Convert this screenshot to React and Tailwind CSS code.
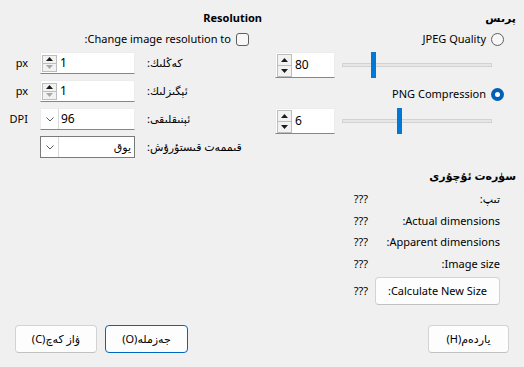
import React from "react";

const font = { fontFamily: '"Segoe UI", "Noto Sans", "DejaVu Sans", sans-serif' };

function Arrow({ up, disabled }) {
  return (
    <svg width="7" height="4" viewBox="0 0 7 4">
      <path d={up ? "M0 4L3.5 0L7 4Z" : "M0 0L3.5 4L7 0Z"} fill={disabled ? "#a8a8a8" : "#1b1b1b"} />
    </svg>
  );
}

function Chevron() {
  return (
    <svg width="8" height="5" viewBox="0 0 8 5">
      <path d="M0.5 0.5L4 4L7.5 0.5" fill="none" stroke="#5c5c5c" strokeWidth="1" />
    </svg>
  );
}

function SpinBox({ value, tall, downDisabled }) {
  return (
    <div
      dir="ltr"
      className={
        "flex items-center bg-white border border-[#ececec] border-b-[#868686] pl-px " +
        (tall ? "w-[60px] h-[26px]" : "w-[95px] h-[22px]")
      }
    >
      <div className={"flex flex-col w-[15px] " + (tall ? "h-[23px]" : "h-[17px]")}>
        <div className="flex-1 flex items-center justify-center border border-[#bdbdbd] bg-[#f2f2f2]">
          <Arrow up />
        </div>
        <div className="flex-1 flex items-center justify-center border border-t-0 border-[#bdbdbd] bg-[#f2f2f2]">
          <Arrow disabled={downDisabled} />
        </div>
      </div>
      <span className="pl-[3px] text-[12px] text-black">{value}</span>
    </div>
  );
}

function Combo({ value, boxed }) {
  return (
    <div
      className={
        "flex items-center w-[95px] h-[22px] bg-white " +
        (boxed ? "border border-[#7a7a7a]" : "border border-[#ececec] border-b-[#868686]")
      }
    >
      <div dir="ltr" className="flex flex-1 items-center h-full">
        <div className="w-[18px] h-full flex items-center justify-center border-r border-[#d9d9d9]">
          <Chevron />
        </div>
        {boxed ? (
          <span dir="rtl" className="flex-1 text-right pr-[3px] text-[11px]">
            {value}
          </span>
        ) : (
          <span className="pl-[2px] text-[12px]">{value}</span>
        )}
      </div>
    </div>
  );
}

function Slider({ pos }) {
  return (
    <div className="relative w-[150px] h-[26px] flex items-center">
      <div className="w-full h-[4px] bg-[#e7e7e7] border border-[#d2d2d2]" />
      <div className={"absolute top-0 h-[26px] w-[5px] bg-[#0078d7] " + pos} />
    </div>
  );
}

function Radio({ checked, label }) {
  return (
    <div className="flex items-center gap-[5px] h-[18px] pr-[12px]">
      {checked ? (
        <span className="w-[13px] h-[13px] rounded-full bg-[#005fb8] flex items-center justify-center">
          <span className="w-[5px] h-[5px] rounded-full bg-white" />
        </span>
      ) : (
        <span className="w-[13px] h-[13px] rounded-full border border-[#5f5f5f] bg-[#f7f7f7]" />
      )}
      <span className="text-[11px]">{label}</span>
    </div>
  );
}

function Btn({ children, primary, w }) {
  return (
    <div
      className={
        "h-[28px] flex items-center justify-center rounded-[4px] bg-[#fdfdfd] text-[11px] whitespace-nowrap " +
        w +
        (primary ? " border border-[#0067c0]" : " border border-[#d3d3d3] border-b-[#c2c2c2]")
      }
    >
      {children}
    </div>
  );
}

export default function App() {
  return (
    <div
      dir="rtl"
      style={font}
      className="w-[524px] h-[367px] bg-[#f0f0f0] text-black flex flex-col pt-[9px] pb-[14px] overflow-hidden"
    >
      <div className="flex gap-[8px] px-[8px]">
        {/* quality + image info */}
        <div className="w-[246px] flex flex-col">
          <div className="h-[18px] text-[11px] font-bold leading-[18px]">پرىس</div>
          <div className="mt-[3px]">
            <Radio label="JPEG Quality" />
          </div>
          <div className="flex items-center gap-[7px] pr-[24px] mt-[4px]">
            <Slider pos="left-[29px]" />
            <SpinBox value="80" tall />
          </div>
          <div className="mt-[7px]">
            <Radio checked label="PNG Compression" />
          </div>
          <div className="flex items-center gap-[7px] pr-[24px] mt-[5px]">
            <Slider pos="left-[55px]" />
            <SpinBox value="6" tall />
          </div>

          <div className="mt-[33px] h-[18px] text-[11px] font-bold leading-[18px]">سۈرەت ئۇچۇرى</div>
          <div className="grid grid-cols-[125px_auto] gap-x-[7px] pr-[16px] text-[11px] mt-[3px] items-center">
            <div className="h-[22px] leading-[22px]">تىپ:</div>
            <div className="h-[22px] leading-[22px]">???</div>
            <div className="h-[21px] leading-[21px]">Actual dimensions:</div>
            <div className="h-[21px] leading-[21px]">???</div>
            <div className="h-[22px] leading-[22px]">Apparent dimensions:</div>
            <div className="h-[22px] leading-[22px]">???</div>
            <div className="h-[21px] leading-[21px]">Image size:</div>
            <div className="h-[21px] leading-[21px]">???</div>
            <div className="pt-[3px]">
              <Btn w="w-[125px]">Calculate New Size:</Btn>
            </div>
            <div className="pt-[3px]">???</div>
          </div>
        </div>

        {/* resolution */}
        <div className="flex-1 flex flex-col">
          <div className="h-[18px] text-[11px] font-bold leading-[18px]">Resolution</div>
          <div className="flex items-center gap-[5px] h-[18px] pr-[13px] mt-[3px]">
            <span className="w-[13px] h-[13px] rounded-[3px] border border-[#5f5f5f] bg-[#f7f7f7]" />
            <span className="text-[11px]">Change image resolution to:</span>
          </div>
          <div className="grid grid-cols-[103px_95px_20px] gap-x-[12px] gap-y-[6px] pr-[12px] mt-[4px] items-center text-[11px]">
            <div className="text-left whitespace-nowrap">كەڭلىك:</div>
            <SpinBox value="1" downDisabled />
            <div>px</div>

            <div className="text-left whitespace-nowrap">ئېگىزلىك:</div>
            <SpinBox value="1" downDisabled />
            <div>px</div>

            <div className="text-left whitespace-nowrap">ئېنىقلىقى:</div>
            <Combo value="96" />
            <div>DPI</div>

            <div className="text-left whitespace-nowrap">قىممەت قىستۇرۇش:</div>
            <Combo value="يوق" boxed />
            <div />
          </div>
        </div>
      </div>

      <div className="mt-auto flex justify-between px-[15px]">
        <Btn w="w-[81px]">ياردەم(H)</Btn>
        <div className="flex gap-[8px]">
          <Btn primary w="w-[83px]">جەزملە(O)</Btn>
          <Btn w="w-[82px]">ۋاز كەچ(C)</Btn>
        </div>
      </div>
    </div>
  );
}
